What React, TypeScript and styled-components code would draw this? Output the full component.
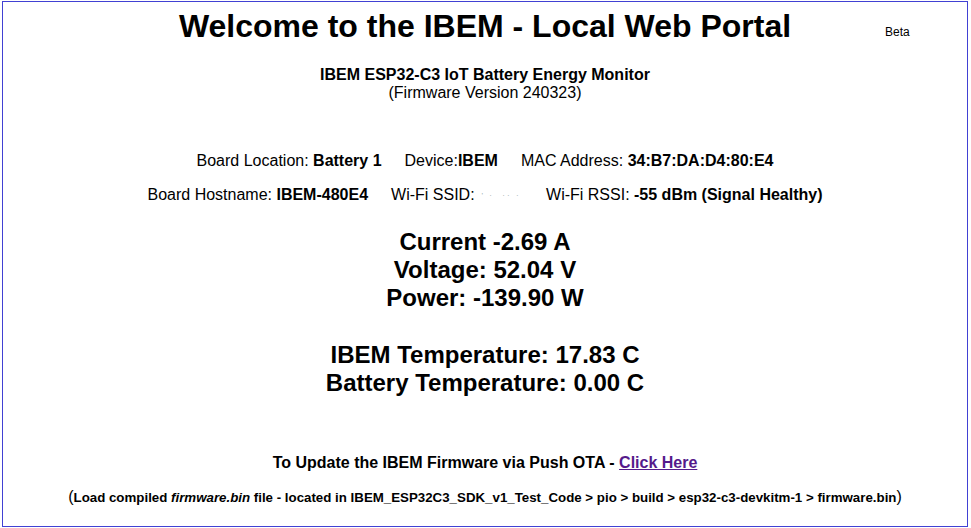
import React from "react";
import styled, { createGlobalStyle } from "styled-components";

const Global = createGlobalStyle`
  html, body { margin: 0; padding: 0; background: #fff; }
  body { font-family: "Liberation Sans", Arial, sans-serif; color: #000; }
`;

const Frame = styled.div`
  margin: 1px 3px 0 2px;
  height: 524px;
  border: 1px solid #4141d3;
  display: flex;
  flex-direction: column;
  align-items: stretch;
  text-align: center;
`;

const Header = styled.div`
  display: grid;
  grid-template-columns: 1fr auto 1fr;
  align-items: center;
  padding-top: 6px;
`;

const Title = styled.h1`
  grid-column: 2;
  margin: 0;
  font-size: 32px;
  line-height: 37px;
  font-weight: bold;
`;

const Beta = styled.span`
  grid-column: 3;
  justify-self: start;
  padding-left: 94px;
  padding-top: 10px;
  font-size: 12px;
`;

const Sub = styled.div<{ $bold?: boolean; $top?: number }>`
  font-size: 16px;
  line-height: 18px;
  font-weight: ${(p) => (p.$bold ? "bold" : "normal")};
  margin-top: ${(p) => p.$top ?? 0}px;
`;

const InfoRow = styled.div<{ $top: number }>`
  display: flex;
  justify-content: center;
  gap: 23px;
  font-size: 16px;
  line-height: 18px;
  margin-top: ${(p) => p.$top}px;
  color: #000;
`;

const Field = styled.span`
  white-space: pre;
`;

const Val = styled.b``;

const Hidden = styled.span`
  display: inline-block;
  width: 44px;
  font-size: 8px;
  letter-spacing: 2px;
  color: #9aa;
  vertical-align: middle;
`;

const Reading = styled.div<{ $top?: number }>`
  font-size: 24px;
  line-height: 28px;
  font-weight: bold;
  margin-top: ${(p) => p.$top ?? 0}px;
`;

const Ota = styled.div`
  margin-top: 57px;
  font-size: 16px;
  line-height: 18px;
  font-weight: bold;
`;

const Link = styled.a`
  color: #551a8b;
  text-decoration: underline;
`;

const Note = styled.div`
  margin-top: 16px;
  font-size: 13.3px;
  line-height: 18px;
  font-weight: bold;
`;

const Paren = styled.span`
  font-weight: normal;
  font-size: 16px;
`;

export default function App() {
  return (
    <>
      <Global />
      <Frame>
        <Header>
          <Title>Welcome to the IBEM - Local Web Portal</Title>
          <Beta>Beta</Beta>
        </Header>
        <Sub $bold $top={21}>IBEM ESP32-C3 IoT Battery Energy Monitor</Sub>
        <Sub>(Firmware Version 240323)</Sub>
        <InfoRow $top={50}>
          <Field>Board Location: <Val>Battery 1</Val></Field>
          <Field>Device:<Val>IBEM</Val></Field>
          <Field>MAC Address: <Val>34:B7:DA:D4:80:E4</Val></Field>
        </InfoRow>
        <InfoRow $top={16}>
          <Field>Board Hostname: <Val>IBEM-480E4</Val></Field>
          <Field>Wi-Fi SSID: <Hidden>' ·  ·· ·</Hidden></Field>
          <Field>Wi-Fi RSSI: <Val>-55 dBm (Signal Healthy)</Val></Field>
        </InfoRow>
        <Reading $top={23}>Current -2.69 A</Reading>
        <Reading>Voltage: 52.04 V</Reading>
        <Reading>Power: -139.90 W</Reading>
        <Reading $top={29}>IBEM Temperature: 17.83 C</Reading>
        <Reading>Battery Temperature: 0.00 C</Reading>
        <Ota>
          To Update the IBEM Firmware via Push OTA - <Link href="#">Click Here</Link>
        </Ota>
        <Note>
          <Paren>(</Paren>Load compiled <i>firmware.bin</i> file - located in IBEM_ESP32C3_SDK_v1_Test_Code &gt; pio &gt; build &gt; esp32-c3-devkitm-1 &gt; firmware.bin<Paren>)</Paren>
        </Note>
      </Frame>
    </>
  );
}
